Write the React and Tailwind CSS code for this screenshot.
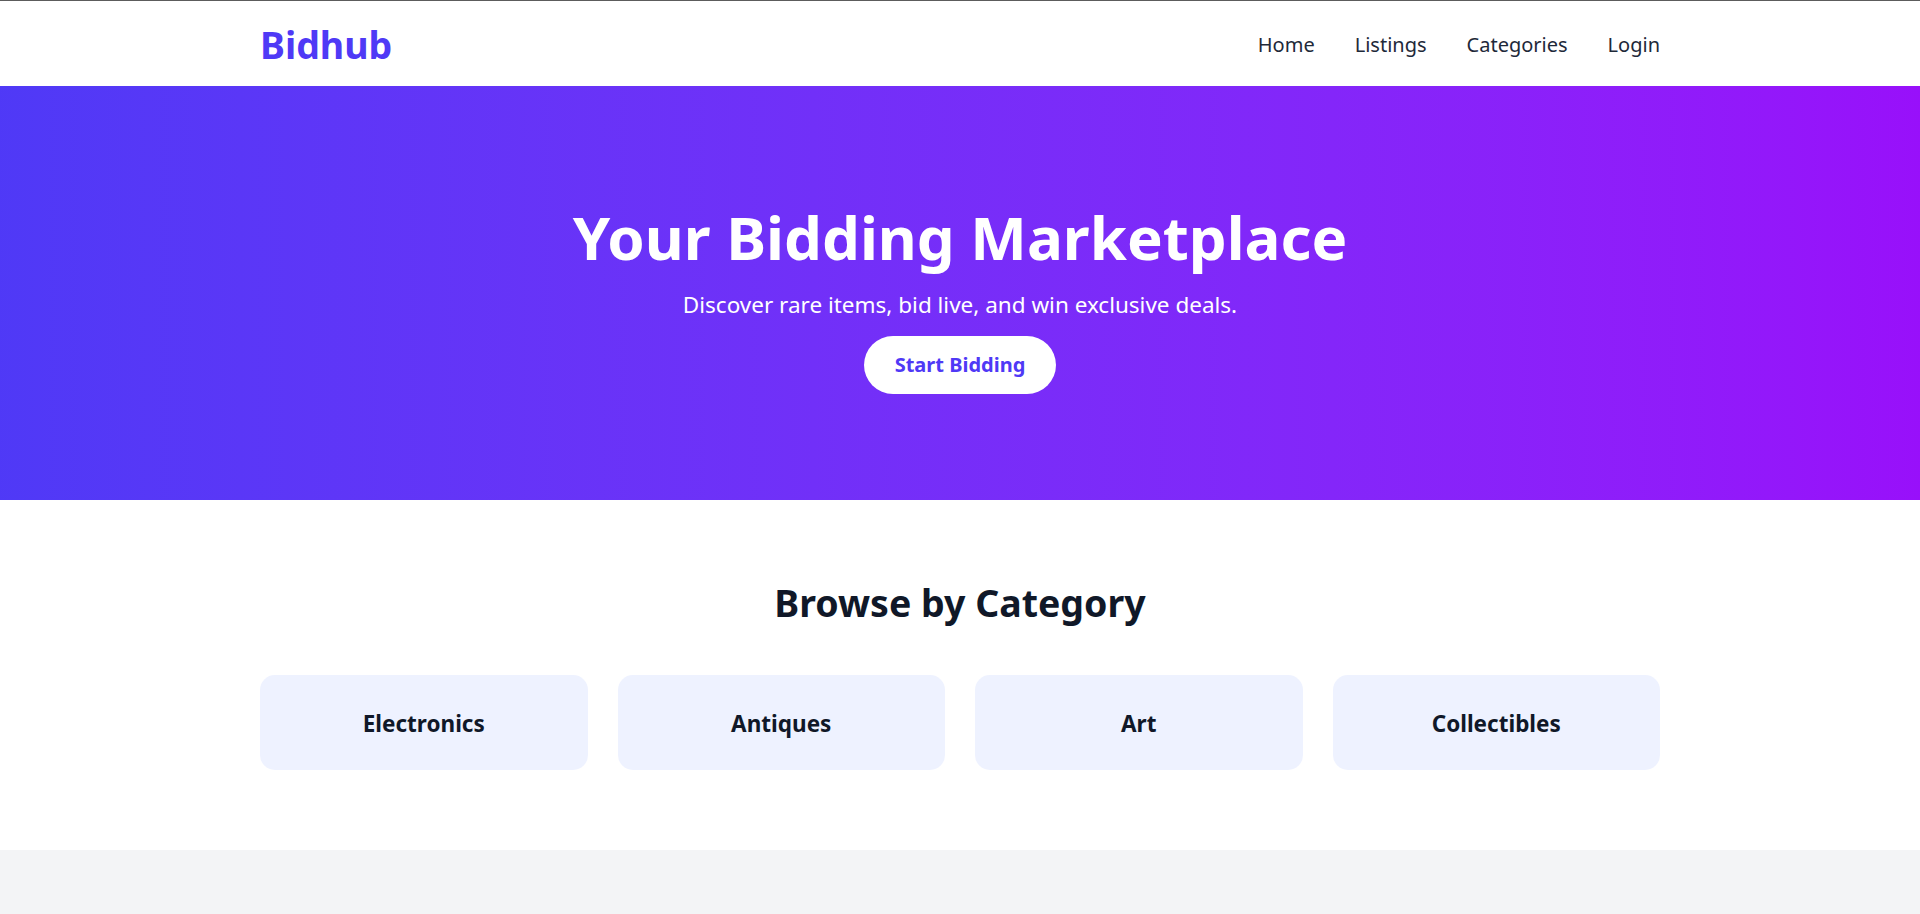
import React from "react";

const categories = ["Electronics", "Antiques", "Art", "Collectibles"];
const links = ["Home", "Listings", "Categories", "Login"];

const App = () => {
  return (
    <div className="min-h-screen bg-white font-['Noto_Sans',sans-serif]">
      {/* Navbar */}
      <nav className="bg-white border-t border-[#5c5c5c]">
        <div className="w-[1400px] mx-auto h-[85px] pt-[2px] flex items-center justify-between">
          <a href="#" className="text-[37.5px] leading-[45px] font-bold text-indigo-600">Bidhub</a>
          <ul className="flex items-center gap-10">
            {links.map((l) => (
              <li key={l}>
                <a href="#" className="text-xl leading-[30px] text-gray-800 hover:text-indigo-600">{l}</a>
              </li>
            ))}
          </ul>
        </div>
      </nav>

      {/* Hero */}
      <section className="bg-linear-to-r from-indigo-600 to-purple-600 text-white text-center pt-[121px] pb-[106px]">
        <h1 className="text-6xl leading-[60px] font-bold mb-[20px]">Your Bidding Marketplace</h1>
        <p className="text-[22.5px] leading-[35px] mb-[14px]">Discover rare items, bid live, and win exclusive deals.</p>
        <button className="bg-white text-indigo-600 text-xl leading-[30px] font-bold px-[31px] py-[14px] rounded-full hover:bg-gray-100">
          Start Bidding
        </button>
      </section>

      {/* Categories */}
      <section className="py-20 bg-white">
        <div className="w-[1400px] mx-auto">
          <h2 className="text-[37.5px] leading-[45px] font-bold text-gray-900 text-center mb-[50px]">Browse by Category</h2>
          <div className="grid grid-cols-4 gap-[30px]">
            {categories.map((c) => (
              <div key={c} className="bg-indigo-50 rounded-[15px] pt-[31px] pb-[29px] text-center cursor-pointer hover:bg-indigo-100">
                <h3 className="text-[22.5px] leading-[35px] font-bold text-gray-900">{c}</h3>
              </div>
            ))}
          </div>
        </div>
      </section>

      {/* Listings */}
      <section className="bg-gray-100 min-h-[2720px]"></section>
    </div>
  );
};

export default App;
